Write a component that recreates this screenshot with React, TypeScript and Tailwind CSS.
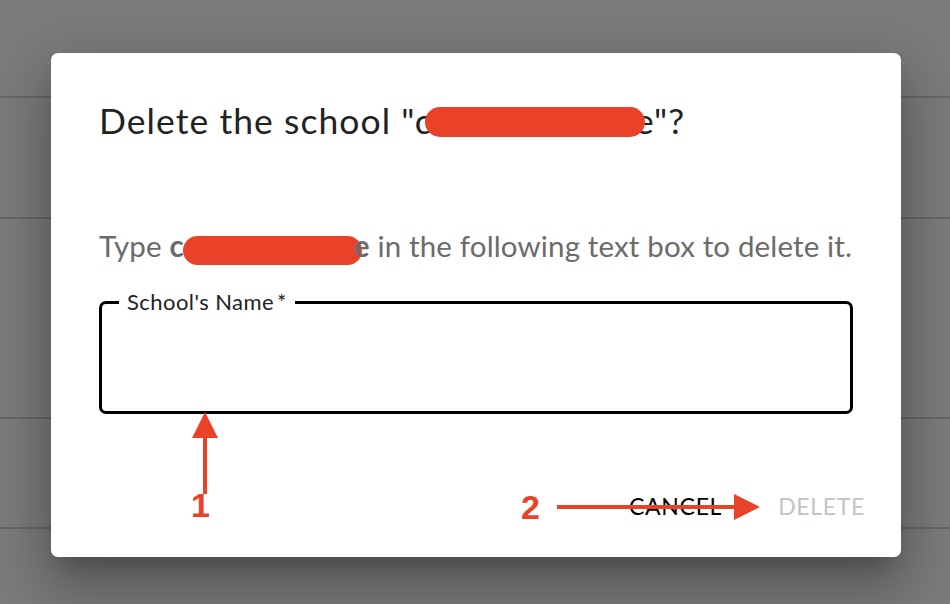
import React from 'react'

const font = { fontFamily: 'Lato, "Noto Sans", sans-serif' }

function Redaction({ w, h }: { w: number; h: number }) {
  return (
    <span
      className="inline-block rounded-full bg-[#ea4129] align-middle"
      style={{ width: w, height: h }}
    />
  )
}

export default function App() {
  const rows = [98, 121, 200, 110]

  return (
    <div className="relative h-[604px] w-[950px] overflow-hidden bg-[#7c7c7c]" style={font}>
      {/* page behind the backdrop */}
      <div className="flex flex-col">
        {rows.map((h, i) => (
          <div key={i} className="border-b-2 border-[#686868]" style={{ height: h }} />
        ))}
      </div>

      {/* dialog */}
      <div className="absolute left-[51px] top-[53px] flex h-[504px] w-[850px] flex-col rounded-[7px] bg-white px-[48px] shadow-[0_16px_22px_-10px_rgba(0,0,0,0.25),0_36px_56px_5px_rgba(0,0,0,0.16),0_14px_68px_12px_rgba(0,0,0,0.14)]">
        <h2 className="mt-[43px] text-[35.5px] leading-[44px] tracking-[0.03em] text-[#222]">
          Delete the school "c
          <span className="relative -ml-[8px] -mr-[10px] inline-block align-[3px]">
            <Redaction w={220} h={30} />
          </span>
          e"?
        </h2>

        <p className="-mr-[10px] mt-[85px] whitespace-nowrap text-[29.5px] leading-[36px] tracking-[0.005em] text-[#6b6b6b]">
          Type <b className="font-bold">c</b>
          <span className="-ml-[1px] -mr-[8px] inline-block align-[-1px]">
            <Redaction w={179} h={29} />
          </span>
          <b className="font-bold">e</b> in the following text box to delete it.
        </p>

        <fieldset className="mt-[26px] h-[123px] rounded-[7px] border-[3px] border-black px-[17px]">
          <legend className="px-[8px] text-[22px] leading-[22px] tracking-[0.02em] text-[#222]">
            School's Name<span className="ml-[3px]">*</span>
          </legend>
        </fieldset>

        <div className="mt-[75px] flex justify-end gap-[56px] text-[23px] uppercase tracking-[0.03em]">
          <span className="text-black">Cancel</span>
          <span className="-mr-[12px] text-[#c4c4c4]">Delete</span>
        </div>
      </div>

      {/* annotation 1 */}
      <svg className="absolute left-[190px] top-[412px]" width="30" height="110" viewBox="0 0 30 110">
        <polygon points="15,0 28,26 2,26" fill="#ea4129" />
        <rect x="13" y="24" width="4" height="58" fill="#ea4129" />
      </svg>
      <span
        className="absolute left-[191px] top-[485px] text-[34px] font-bold leading-[40px] text-[#ea4129]"
        style={{ fontFamily: '"Liberation Sans", Arial, sans-serif' }}
      >
        1
      </span>

      {/* annotation 2 */}
      <span
        className="absolute left-[521px] top-[487px] text-[34px] font-bold leading-[40px] text-[#ea4129]"
        style={{ fontFamily: '"Liberation Sans", Arial, sans-serif' }}
      >
        2
      </span>
      <svg className="absolute left-[556px] top-[493px]" width="210" height="30" viewBox="0 0 210 30">
        <rect x="1" y="12" width="182" height="4" fill="#ea4129" />
        <polygon points="204,14 178,1 178,27" fill="#ea4129" />
      </svg>
    </div>
  )
}
